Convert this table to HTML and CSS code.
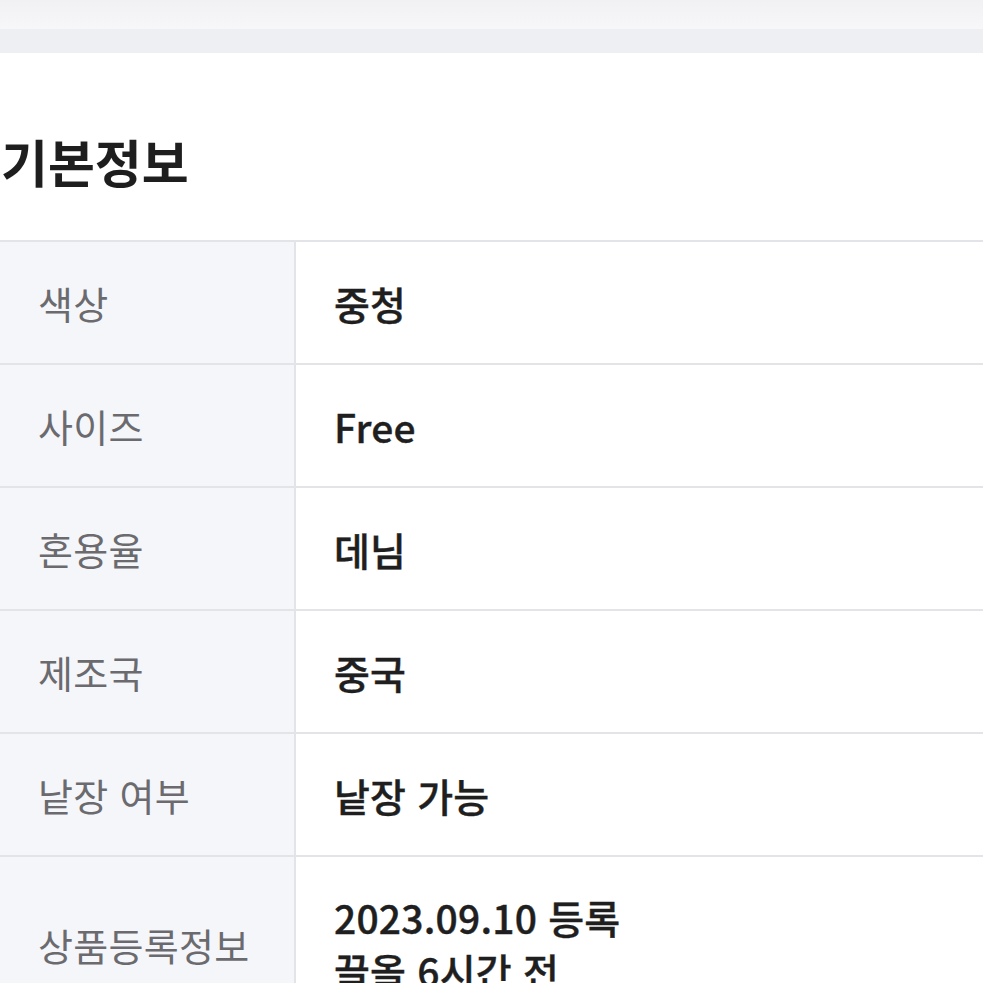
FILE: index.html
```html
<!DOCTYPE html>
<html lang="ko">
<head>
<meta charset="utf-8">
<link rel="stylesheet" href="styles.css">
</head>
<body>
<div class="topbar"></div>
<div class="band"></div>
<section class="info">
  <h2 class="title">기본정보</h2>
  <div class="table">
    <div class="row"><div class="label">색상</div><div class="value">중청</div></div>
    <div class="row"><div class="label">사이즈</div><div class="value">Free</div></div>
    <div class="row"><div class="label">혼용율</div><div class="value">데님</div></div>
    <div class="row"><div class="label">제조국</div><div class="value">중국</div></div>
    <div class="row"><div class="label">낱장 여부</div><div class="value">낱장 가능</div></div>
    <div class="row last"><div class="label">상품등록정보</div><div class="value multi">2023.09.10 등록<br>끌올 6시간 전</div></div>
  </div>
</section>
</body>
</html>
```

FILE: styles.css
```css
html, body {
  margin: 0;
  padding: 0;
  background: #fff;
  overflow: hidden;
  height: 983px;
}
body {
  font-family: "Noto Sans CJK KR", "Noto Sans", sans-serif;
  color: #222;
}
.topbar {
  height: 29px;
  background: linear-gradient(#f1f1f3, #f7f7f9);
}
.band {
  height: 24px;
  background: #eeeff3;
}
.info {
  padding-top: 75px;
}
.title {
  margin: 0 0 0 1px;
  font-size: 51px;
  font-weight: 700;
  line-height: 66px;
  color: #1e1e1e;
  letter-spacing: 0;
}
.table {
  margin-top: 46px;
  border-top: 2px solid #e3e4e8;
}
.row {
  display: grid;
  grid-template-columns: 296px 1fr;
  height: 121px;
  border-bottom: 2px solid #e3e4e8;
}
.row.last {
  height: 170px;
  border-bottom: none;
}
.label {
  background: #f5f6fa;
  border-right: 2px solid #e3e4e8;
  display: flex;
  align-items: center;
  padding-left: 38px;
  font-size: 38px;
  color: #6b6b6f;
  letter-spacing: 0.3px;
}
.value {
  display: flex;
  align-items: center;
  padding-left: 38px;
  font-size: 39px;
  font-weight: 500;
  color: #1f1f1f;
  letter-spacing: 0.2px;
  -webkit-text-stroke: 0.4px #1f1f1f;
}
.value.multi {
  align-items: flex-start;
  padding-top: 34px;
  line-height: 53px;
}
.row.last .label {
  align-items: flex-start;
  padding-top: 60px;
}
```
